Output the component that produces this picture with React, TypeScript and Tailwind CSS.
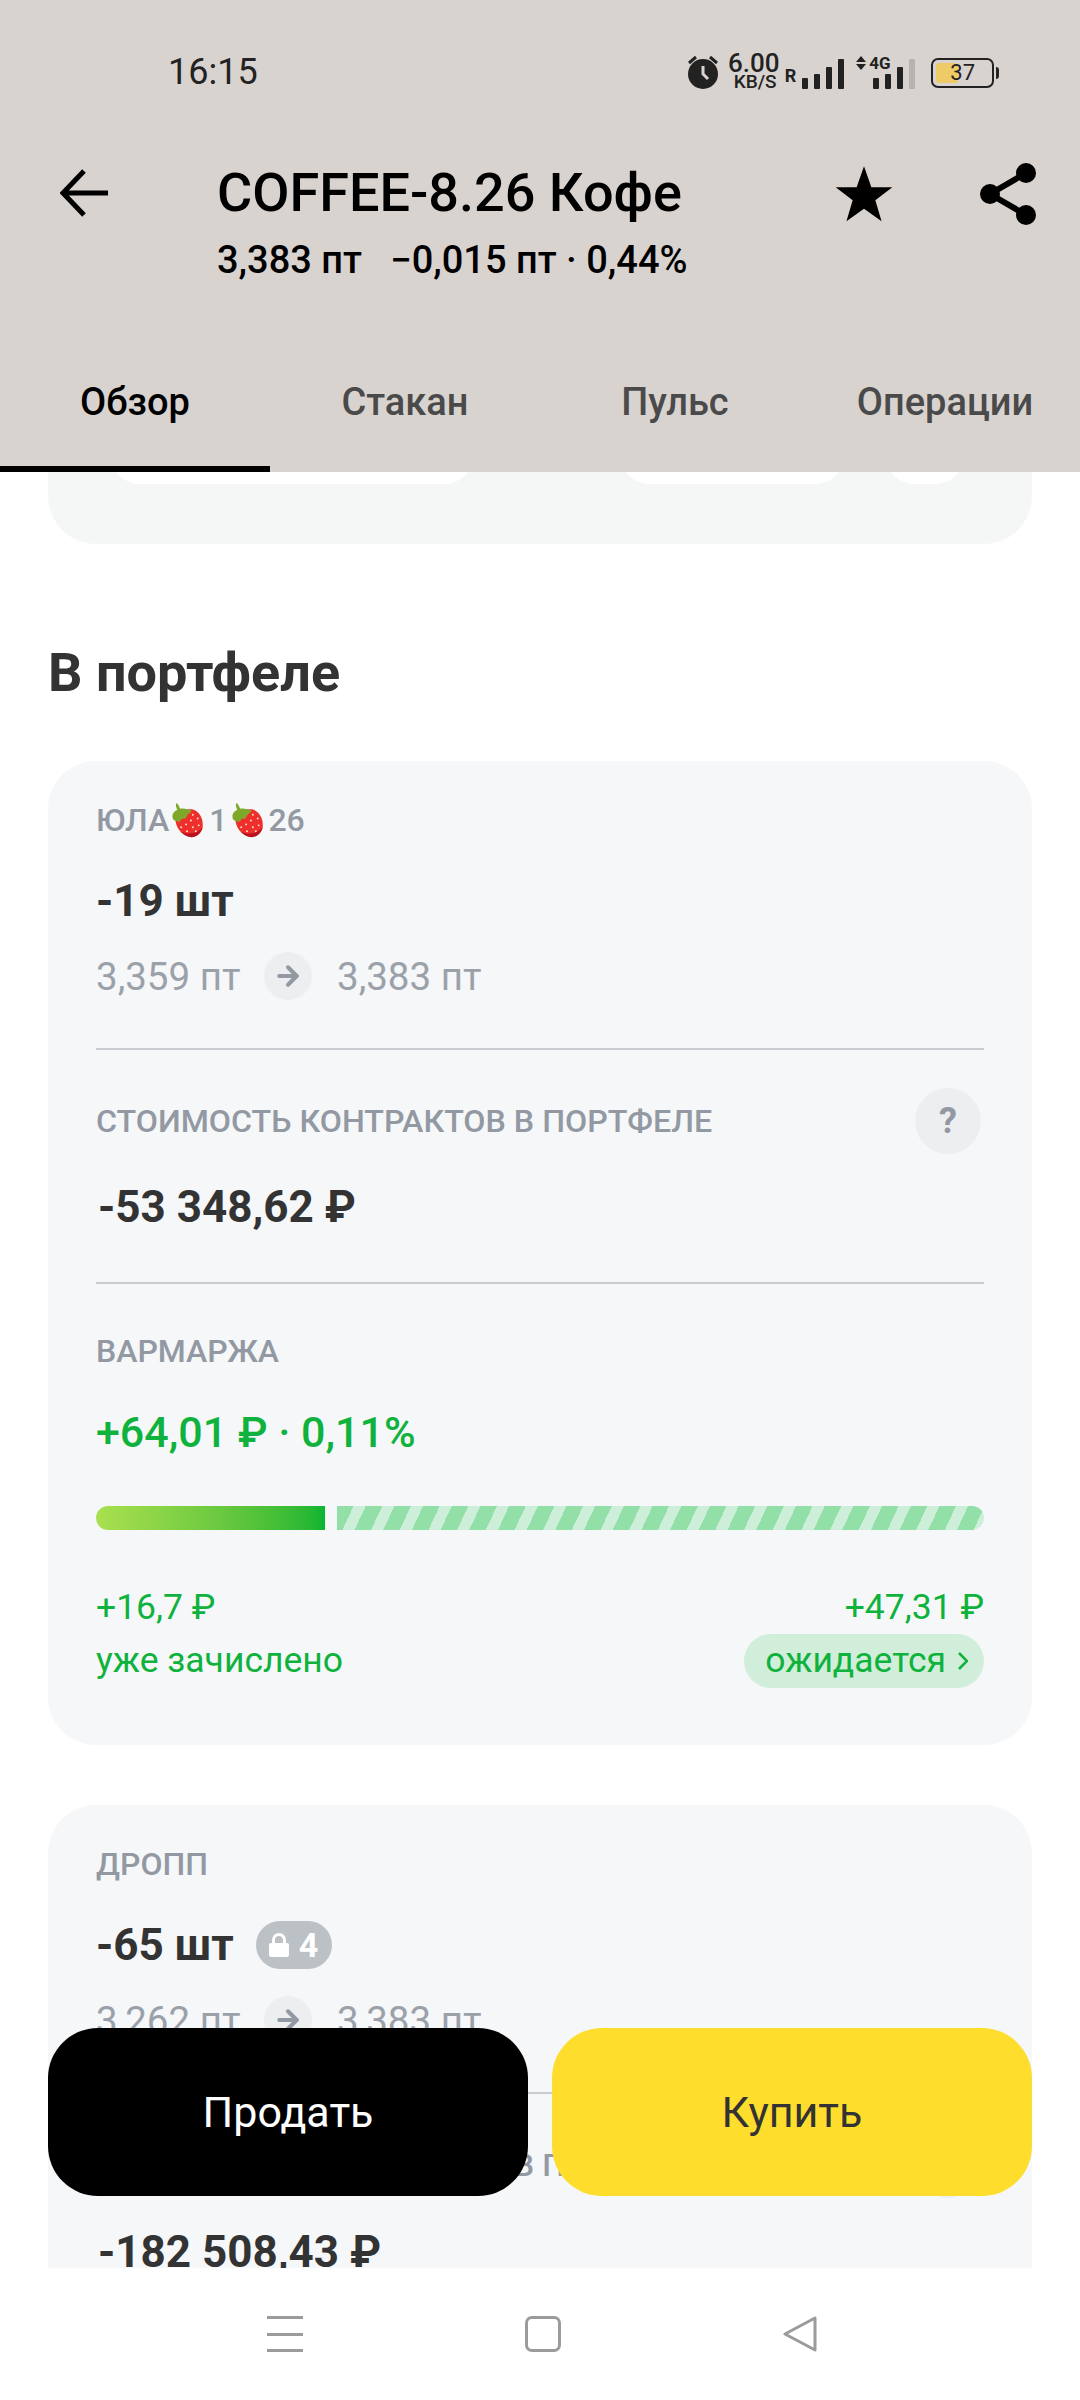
import { ArrowRight } from "lucide-react";

function Strawberry({ className = "" }: { className?: string }) {
	return (
		<svg viewBox="0 0 32 36" className={`h-[35px] w-[32px] shrink-0 ${className}`}>
			<path d="M3 16 C6 9 14 5 22 7 C29 10 32 18 31 25 C30 31 24 36 18 35 C9 33 3 25 3 16Z" fill="#ee2f2c" />
			<path d="M31 25 C30 31 24 36 18 35 C14 34 11 32 8 29 C15 33 26 32 31 25Z" fill="#b9131f" />
			<path d="M4 0 C6 1 7 4 8 6 C12 5 16 7 20 8 C19 10 16 11 15 13 C14 15 13 17 10 16 C8 19 6 21 4 18 C2 19 0 17 0 14 C0 10 3 8 5 7 C4 5 3 2 4 0Z" fill="#7fa82a" />
			<g fill="#ffe3d0">
				<circle cx="21" cy="12" r="1" /><circle cx="26" cy="16" r="1" /><circle cx="19" cy="18" r="1" />
				<circle cx="27" cy="23" r="1" /><circle cx="14" cy="22" r="1" /><circle cx="21" cy="25" r="1" />
				<circle cx="9" cy="25" r="1" /><circle cx="15" cy="29" r="1" /><circle cx="24" cy="29" r="1" />
			</g>
		</svg>
	);
}

function Bars({ lastMuted }: { lastMuted?: boolean }) {
	return (
		<svg viewBox="0 0 42 30" className="h-[30px] w-[42px]">
			<rect x="0" y="19" width="6" height="11" rx="1" fill="#222" />
			<rect x="12" y="15" width="6" height="15" rx="1" fill="#222" />
			<rect x="24" y="8" width="6" height="22" rx="1" fill="#222" />
			<rect x="36" y="0" width="6" height="30" rx="1" fill={lastMuted ? "#b5b3b0" : "#222"} />
		</svg>
	);
}

function StatusBar() {
	return (
		<div className="flex h-[144px] items-center pl-[168px] text-[#222]">
			<span className="text-[36px] leading-none">16:15</span>
			<div className="ml-[429px] flex items-center">
				<svg viewBox="0 0 32 34" className="h-[34px] w-[32px]">
					<circle cx="16" cy="19" r="15" fill="#222" />
					<path d="M16 11 V19 L21 24" stroke="#d9d3d0" strokeWidth="3" fill="none" />
					<path d="M2 8 L9 2 M30 8 L23 2" stroke="#222" strokeWidth="3" />
				</svg>
				<div className="ml-[9px] flex w-[52px] flex-col items-center font-medium">
					<span className="text-[26px] leading-[20px]">6.00</span>
					<span className="ml-[3px] text-[19px] leading-[18px]">KB/S</span>
				</div>
				<span className="mt-[8px] ml-[5px] text-[18px] leading-none font-bold">R</span>
				<div className="mt-[4px] ml-[6px]">
					<Bars />
				</div>
				<div className="relative ml-[12px] h-[34px] w-[60px]">
					<svg viewBox="0 0 10 14" className="absolute top-[1px] left-0 h-[14px] w-[10px]">
						<path d="M5 0 L10 6 H0Z M5 14 L0 8 H10Z" fill="#222" />
					</svg>
					<span className="absolute top-0 left-[13px] text-[17px] leading-[16px] font-bold">4G</span>
					<div className="absolute top-[4px] left-[17px]">
						<Bars lastMuted />
					</div>
				</div>
				<div className="relative mt-[2px] ml-[15px] flex h-[30px] w-[63px] items-center rounded-[7px] border-2 border-[#222] p-[3px]">
					<div className="h-full w-[22px] rounded-[3px] bg-[#efcb67]" />
					<span className="absolute inset-0 text-center text-[22px] leading-[26px]">37</span>
				</div>
				<div className="mt-[2px] ml-[2px] h-[12px] w-[3px] rounded-r bg-[#222]" />
			</div>
		</div>
	);
}

function Header() {
	return (
		<header className="h-[472px] shrink-0 bg-[#d9d3d0]">
			<StatusBar />
			<div className="flex h-[148px] items-start">
				<svg viewBox="0 0 50 48" className="mt-[25px] ml-[60px] h-[48px] w-[50px]" fill="none" stroke="#000" strokeWidth="5">
					<path d="M48 24 H4 M24 2 L3 24 L24 46" />
				</svg>
				<div className="mt-[19px] ml-[107px] w-[600px] text-black">
					<div className="text-[54px] leading-[60px] font-medium whitespace-nowrap">COFFEE-8.26 Кофе</div>
					<div className="mt-[15px] text-[38px] leading-[44px] font-medium whitespace-pre">3,383 пт   −0,015 пт · 0,44%</div>
				</div>
				<svg viewBox="0 0 24 24" className="mt-[16px] ml-[13px] h-[68px] w-[68px] shrink-0" fill="#000">
					<path d="M12 2.2 L14.6 9.6 L22 9.6 L16 14.2 L18.2 21.6 L12 17.2 L5.8 21.6 L8 14.2 L2 9.6 L9.4 9.6Z" />
				</svg>
				<svg viewBox="0 0 56 62" className="mt-[19px] ml-[82px] h-[62px] w-[56px] shrink-0" fill="#000">
					<circle cx="46" cy="10" r="10" />
					<circle cx="46" cy="52" r="10" />
					<circle cx="10" cy="31" r="10" />
					<path d="M46 10 L10 31 L46 52" fill="none" stroke="#000" strokeWidth="6" />
				</svg>
			</div>
			<div className="grid h-[180px] grid-cols-4 text-[38px] leading-none font-medium">
				<div className="relative flex items-start justify-center pt-[91px] text-black">
					Обзор
					<div className="absolute right-0 bottom-0 left-0 h-[6px] bg-black" />
				</div>
				<div className="flex items-start justify-center pt-[91px] text-[#4a4a4a]">Стакан</div>
				<div className="flex items-start justify-center pt-[91px] text-[#4a4a4a]">Пульс</div>
				<div className="flex items-start justify-center pt-[91px] whitespace-nowrap text-[#4a4a4a]">Операции</div>
			</div>
		</header>
	);
}

function Label({ children }: { children: React.ReactNode }) {
	return <div className="flex h-[40px] items-center text-[32px] leading-none font-medium text-[#9299a2]">{children}</div>;
}

function PriceRow({ from, to }: { from: string; to: string }) {
	return (
		<div className="mt-[21px] flex h-[48px] items-center text-[38.5px] leading-none text-[#9ba1a9]">
			<span className="w-[168px] pt-[2px]">{from}</span>
			<span className="flex h-[48px] w-[48px] items-center justify-center rounded-full bg-[#eceef0]">
				<ArrowRight size={30} strokeWidth={3.2} className="text-[#9299a2]" />
			</span>
			<span className="ml-[25px] pt-[2px]">{to}</span>
		</div>
	);
}

function CostHeader() {
	return (
		<div className="mt-[38px] flex h-[66px] items-center justify-between">
			<span className="text-[32.2px] leading-none font-medium whitespace-nowrap text-[#9299a2]">СТОИМОСТЬ КОНТРАКТОВ В ПОРТФЕЛЕ</span>
			<span className="mr-[3px] flex h-[66px] w-[66px] items-center justify-center rounded-full bg-[#eceef0] text-[36px] font-bold text-[#9299a2]">?</span>
		</div>
	);
}

function Divider({ className }: { className: string }) {
	return <div className={`h-[2px] bg-[#c9cdd1] ${className}`} />;
}

function Positions() {
	return (
		<>
			<section className="mt-[58px] rounded-[48px] bg-[#f5f7f9] px-[48px] pt-[39px] pb-[57px] text-[#333]">
				<Label>
					ЮЛА
					<Strawberry className="ml-[3px]" />
					<span className="mx-[5px]">1</span>
					<Strawberry />
					<span className="ml-[4px]">26</span>
				</Label>
				<div className="mt-[31px] flex h-[60px] items-center text-[44px] leading-none font-bold">-19 шт</div>
				<PriceRow from="3,359 пт" to="3,383 пт" />
				<Divider className="mt-[48px]" />
				<CostHeader />
				<div className="mt-[23px] flex h-[60px] items-center pl-[2px] text-[44px] leading-none font-bold">-53 348,62 ₽</div>
				<Divider className="mt-[45px]" />
				<div className="mt-[47px]">
					<Label>ВАРМАРЖА</Label>
				</div>
				<div className="mt-[31px] flex h-[60px] items-center text-[43px] leading-none font-medium text-[#0fb23c]">+64,01 ₽ · 0,11%</div>
				<div className="mt-[44px] flex h-[24px] gap-[12px]">
					<div className="w-[229px] rounded-l-full bg-gradient-to-r from-[#a9e04f] to-[#07b532]" />
					<div className="flex-1 rounded-r-full bg-[repeating-linear-gradient(115deg,#92dfa8_0,#92dfa8_15px,#cdeed9_15px,#cdeed9_26px)]" />
				</div>
				<div className="mt-[58px] flex h-[40px] items-center justify-between text-[35.5px] leading-none text-[#0fb23c]">
					<span>+16,7 ₽</span>
					<span>+47,31 ₽</span>
				</div>
				<div className="mt-[6px] flex h-[54px] items-center justify-between text-[35.5px] leading-none text-[#0fb23c]">
					<span>уже зачислено</span>
					<span className="flex h-[54px] items-center gap-[12px] rounded-full bg-[#d0eeda] pr-[16px] pl-[21px]">
						ожидается
						<svg viewBox="0 0 10 18" className="h-[18px] w-[10px]" fill="none" stroke="#0fb23c" strokeWidth="2.5">
							<path d="M1 1 L9 9 L1 17" />
						</svg>
					</span>
				</div>
			</section>

			<section className="mt-[60px] rounded-[48px] bg-[#f5f7f9] px-[48px] pt-[39px] pb-[40px] text-[#333]">
				<Label>ДРОПП</Label>
				<div className="mt-[31px] flex h-[60px] items-center text-[44px] leading-none font-bold">
					-65 шт
					<span className="ml-[22px] flex h-[48px] w-[76px] items-center justify-center gap-[10px] rounded-full bg-[#bcc1c5] text-[34px] text-white">
						<svg viewBox="0 0 20 24" className="h-[24px] w-[20px]" fill="#fff">
							<path d="M2 10 H18 Q20 10 20 12 V22 Q20 24 18 24 H2 Q0 24 0 22 V12 Q0 10 2 10Z" />
							<path d="M4.5 11 V7 A5.5 5.5 0 0 1 15.5 7 V11" fill="none" stroke="#fff" strokeWidth="3" />
						</svg>
						4
					</span>
				</div>
				<PriceRow from="3,262 пт" to="3,383 пт" />
				<Divider className="mt-[48px]" />
				<CostHeader />
				<div className="mt-[24px] flex h-[60px] items-center pl-[2px] text-[44px] leading-none font-bold">-182 508,43 ₽</div>
			</section>
		</>
	);
}

function Main() {
	return (
		<main className="relative flex-1 overflow-hidden px-[48px]">
			<div className="flex h-[72px] items-start rounded-b-[48px] bg-[#f5f7f6] pl-[62px]">
				<div className="-mt-[48px] h-[60px] w-[364px] rounded-[30px] bg-white" />
				<div className="-mt-[48px] ml-[146px] h-[60px] w-[225px] rounded-[30px] bg-white" />
				<div className="-mt-[48px] ml-[40px] h-[60px] w-[80px] rounded-[30px] bg-white" />
			</div>
			<h2 className="mt-[99px] flex h-[60px] items-center text-[54px] leading-none font-bold text-[#333]">В портфеле</h2>
			<Positions />
			<div className="absolute right-[48px] bottom-[72px] left-[48px] flex h-[168px] gap-[24px] text-[43px]">
				<button className="flex-1 rounded-[50px] bg-black text-white">Продать</button>
				<button className="flex-1 rounded-[50px] bg-[#ffdd2d] text-[#333]">Купить</button>
			</div>
		</main>
	);
}

function NavBar() {
	return (
		<nav className="flex h-[132px] shrink-0 items-center justify-center gap-[222px] bg-white pl-[4px]">
			<div className="flex h-[36px] w-[36px] flex-col justify-between">
				<div className="h-[3px] bg-[#9b9b9b]" />
				<div className="h-[3px] bg-[#9b9b9b]" />
				<div className="h-[3px] bg-[#9b9b9b]" />
			</div>
			<div className="h-[36px] w-[36px] rounded-[7px] border-[3px] border-[#9b9b9b]" />
			<svg viewBox="0 0 34 36" className="h-[36px] w-[34px]" fill="none" stroke="#9b9b9b" strokeWidth="3" strokeLinejoin="round">
				<path d="M32 2 V34 L2 18Z" />
			</svg>
		</nav>
	);
}

export default function App() {
	return (
		<div className="flex h-[2400px] w-[1080px] flex-col overflow-hidden bg-white font-[Roboto,sans-serif]">
			<Header />
			<Main />
			<NavBar />
		</div>
	);
}
